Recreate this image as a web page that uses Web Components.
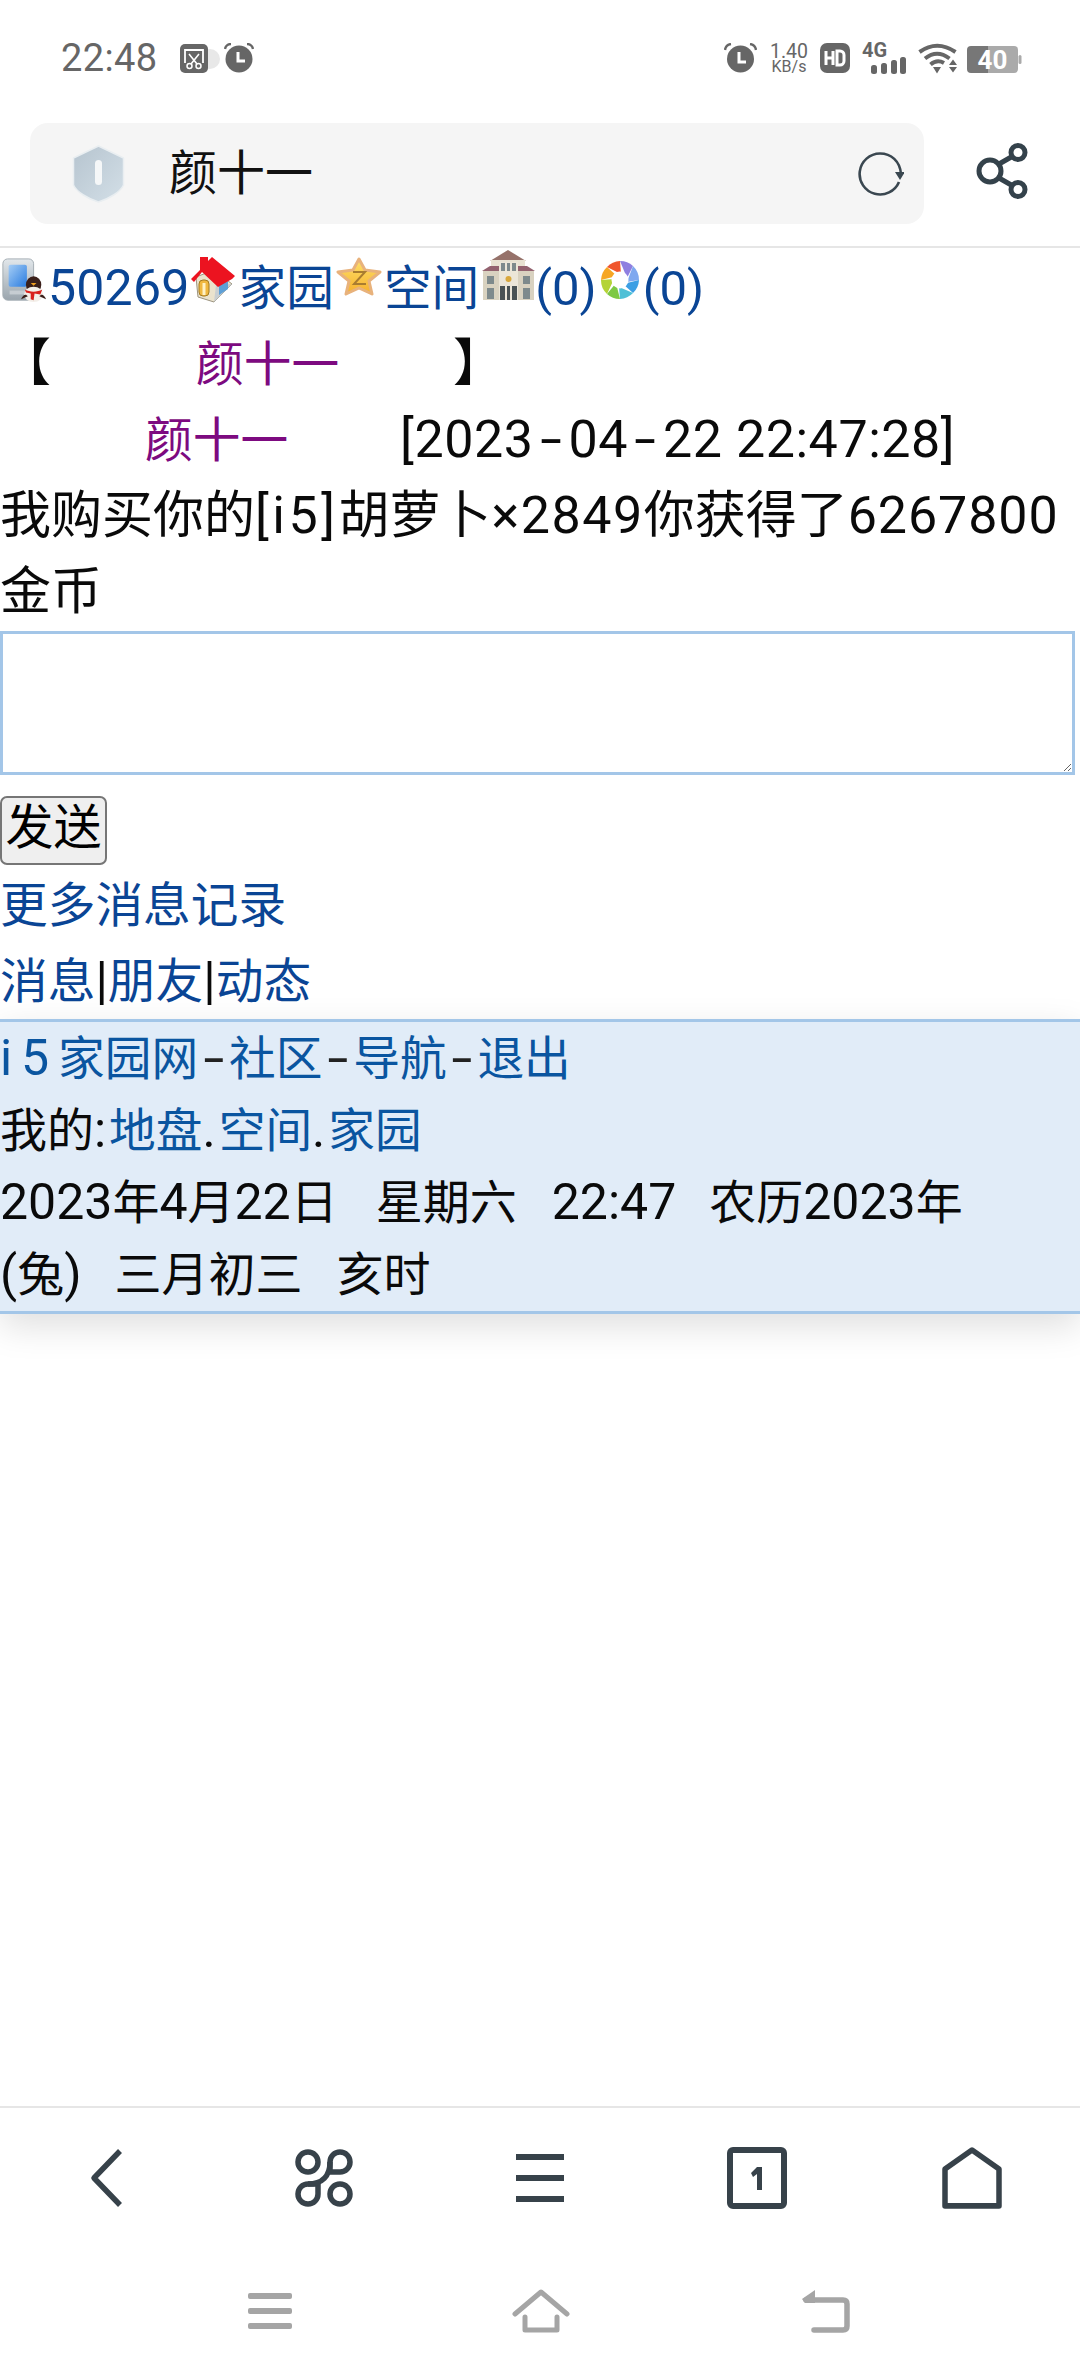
<!DOCTYPE html>
<html lang="zh-CN">
<head>
<meta charset="utf-8">
<style>
html,body{margin:0;padding:0;background:#fff}
body{font-family:Roboto,"Noto Sans CJK SC",sans-serif;font-size:48px;color:#0a0a0a}
</style>
</head>
<body>
<app-shell>
  <status-bar></status-bar>
  <address-bar title-text="颜十一"></address-bar>
  <wap-page></wap-page>
  <browser-nav></browser-nav>
  <system-nav></system-nav>
</app-shell>
<script>
const FONT='Roboto,"Noto Sans CJK SC",sans-serif';
function define(name,html){
  customElements.define(name,class extends HTMLElement{
    constructor(){super();this.attachShadow({mode:'open'}).innerHTML=typeof html==='function'?html(this):html;}
  });
}
define('app-shell',`<style>:host{display:flex;flex-direction:column;width:1080px;height:2376px;overflow:hidden;background:#fff}</style><slot></slot>`);

define('status-bar',`<style>
:host{display:flex;align-items:center;height:123px;box-sizing:border-box;padding:0 58px 0 61px;color:#666;font-family:${FONT}}
.l{display:flex;align-items:center}
.r{display:flex;align-items:center;margin-left:auto;height:31px;margin-top:-7px}
svg{display:block;flex:none}
.time{font-size:38px;letter-spacing:.4px;line-height:44px;width:119px;margin-top:-8px}
.left-icons{display:flex;align-items:center;margin-top:-7px}
.net{display:flex;flex-direction:column;align-items:center;width:38px;margin:0 12px 0 13px}
.net b{font-weight:400;font-size:19.5px;line-height:17px}
.net i{font-style:normal;font-size:16px;line-height:14px}
.sig{position:relative;width:45px;height:31px;margin-left:12px}
.sig span{position:absolute;left:0;top:0;font-size:20px;line-height:15px;font-weight:700}
.batt{position:relative;width:55px;height:27px;margin-left:9px;margin-top:3px}
.batt span{position:absolute;left:0;right:0;top:0;text-align:center;padding-right:4px;font-size:26px;line-height:28px;font-weight:700;color:#fff}
</style>
<div class="l"><div class="time">22:48</div>
<div class="left-icons">
<svg width="28" height="29" viewBox="0 0 28 29"><rect width="28" height="29" rx="5" fill="#666"/><path d="M5 19V6h18v13" fill="none" stroke="#fff" stroke-width="1.8"/><path d="M9 10l8 10M19 10l-8 10" stroke="#fff" stroke-width="1.6"/><circle cx="9.5" cy="22" r="2.5" fill="#666" stroke="#fff" stroke-width="1.5"/><circle cx="18.5" cy="22" r="2.5" fill="#666" stroke="#fff" stroke-width="1.5"/></svg>
<svg width="16" height="29" viewBox="0 0 16 29"><circle cx="2" cy="15" r="10" fill="#e8e8e8"/></svg>
<svg width="30" height="30" viewBox="0 0 30 30"><circle cx="15" cy="16" r="13.5" fill="#666"/><path d="M1 6a6 6 0 0 1 6-5M29 6a6 6 0 0 0-6-5" fill="none" stroke="#666" stroke-width="2.4"/><path d="M14 9v9h7" fill="none" stroke="#fff" stroke-width="3"/></svg>
</div></div>
<div class="r">
<svg width="33" height="30" viewBox="0 0 33 30"><circle cx="16.5" cy="16" r="13.5" fill="#666"/><path d="M1 7a7 7 0 0 1 6-6M32 7a7 7 0 0 0-6-6" fill="none" stroke="#666" stroke-width="2.4"/><path d="M15 9v10h7" fill="none" stroke="#fff" stroke-width="3"/></svg>
<div class="net"><b>1.40</b><i>KB/s</i></div>
<svg width="30" height="30" viewBox="0 0 30 30"><rect width="30" height="30" rx="7" fill="#666"/><path d="M6 8v14M13 8v14M6 15h7" stroke="#fff" stroke-width="3" fill="none"/><path d="M17 8h3a4 4 0 0 1 4 4v6a4 4 0 0 1-4 4h-3z" stroke="#fff" stroke-width="3" fill="none"/></svg>
<div class="sig"><svg width="45" height="31" viewBox="0 0 45 31"><rect x="9" y="22" width="6" height="9" rx="2.5" fill="#666"/><rect x="19" y="20" width="6" height="11" rx="2.5" fill="#666"/><rect x="29" y="17" width="6" height="14" rx="2.5" fill="#666"/><rect x="38" y="14" width="6" height="17" rx="2.5" fill="#666"/></svg><span>4G</span></div>
<svg width="40" height="31" viewBox="0 0 40 31" style="margin-left:11px"><g fill="none" stroke="#666" stroke-linecap="butt"><path d="M1.5 9Q19 -3.5 37.5 9" stroke-width="4"/><path d="M7 15.5Q19 6 31.5 15.5" stroke-width="4"/><path d="M12.5 21.5Q19 16 26 20" stroke-width="4"/></g><path d="M15 24h8l-4 6.5zM31 22l4-5.5 4 5.5zM31 24h8l-4 5.5z" fill="#666"/></svg>
<div class="batt"><svg width="55" height="27" viewBox="0 0 55 27"><path d="M21 0H47a4 4 0 0 1 4 4v19a4 4 0 0 1-4 4H21z" fill="#aaa"/><path d="M21 0H4a4 4 0 0 0-4 4v19a4 4 0 0 0 4 4H21z" fill="#777"/><rect x="51.5" y="9" width="3" height="9" rx="1.5" fill="#aaa"/></svg><span>40</span></div>
</div>`);

define('address-bar',el=>`<style>
:host{display:flex;align-items:flex-start;height:125px;box-sizing:border-box;padding:0 52px 0 30px;border-bottom:2px solid #e6e6e6;font-family:${FONT}}
.box{display:flex;align-items:center;width:894px;height:101px;background:#f5f5f5;border-radius:18px;box-sizing:border-box;padding:0 20px 0 41px}
.t{margin-left:43px;font-size:48px;line-height:60px;color:#111}
.reload{margin-left:auto}
.share{margin-left:52px;margin-top:20px}
svg{display:block;flex:none}
</style>
<div class="box">
<svg width="55" height="58" viewBox="0 0 54 58"><defs><linearGradient id="sh" x1="0" y1="0" x2="1" y2="1"><stop offset="0" stop-color="#b6c4cf"/><stop offset="1" stop-color="#d3dfe7"/></linearGradient></defs><path d="M27 1L52 13V40C49 47 37 54 27 57C17 54 5 47 2 40V13z" fill="url(#sh)" stroke="#e9eef1" stroke-width="1.5" stroke-linejoin="round"/><rect x="23.5" y="15" width="7" height="25" rx="3.5" fill="#f5f7f8"/></svg>
<div class="t">${el.getAttribute('title-text')||''}</div>
<svg class="reload" width="46" height="44" viewBox="0 0 46 44"><path d="M41 30A20.5 20.5 0 1 1 22 1.5C33 1.5 42 9 43 22" fill="none" stroke="#3a4750" stroke-width="2.6"/><path d="M37 20h10l-5 8z" fill="#3a4750"/></svg>
</div>
<svg class="share" width="52" height="56" viewBox="0 0 52 56"><g fill="none" stroke="#34424b" stroke-width="5"><circle cx="14" cy="28" r="11"/><circle cx="42" cy="9.5" r="7"/><circle cx="42" cy="46.5" r="7"/><path d="M23 21L37 13M23 35L37 43"/></g></svg>`);

define('wap-link',`<style>:host{color:#0a4595;font-size:47.7px}</style><slot></slot>`);
define('wap-user',`<style>:host{color:#7d0a80;font-size:47.7px}</style><slot></slot>`);

define('mini-icon',el=>{
 const k=el.getAttribute('kind');
 const art={
 phone:`<svg width="48" height="47" viewBox="0 0 50 47"><defs><linearGradient id="p" x1="0" y1="0" x2="0" y2="1"><stop offset="0" stop-color="#e2e7eb"/><stop offset="1" stop-color="#9aa5ad"/></linearGradient><linearGradient id="ps" x1="0" y1="0" x2="1" y2="1"><stop offset="0" stop-color="#a5cdf5"/><stop offset="1" stop-color="#2a7ce0"/></linearGradient></defs><rect x="3" y="1" width="32" height="43" rx="5" fill="url(#p)" stroke="#a3acb3"/><rect x="9" y="7" width="19" height="23" rx="2" fill="url(#ps)"/><rect x="10" y="34" width="16" height="4" fill="#c6cdd2"/><ellipse cx="35" cy="28" rx="8" ry="9" fill="#3a1f1a"/><ellipse cx="35" cy="38" rx="10" ry="8" fill="#f3eee8"/><path d="M26 33c5 3 13 3 18 0l-2 5-6-1-1 7-3-1v-6l-5-1z" fill="#d8201c"/><path d="M32 26h6l-3 3z" fill="#f0a020"/><path d="M22 43c2-5 5-6 7-3zM48 43c-2-5-5-6-7-3z" fill="#3a1f1a"/></svg>`,
 home:`<svg width="47" height="48" viewBox="0 0 47 48"><path d="M6 22L8 42L24 47L42 29L24 15z" fill="#ebe3cd" stroke="#9c9480" stroke-width="1"/><path d="M42 29L24 47L26 30z" fill="#c9cfd2"/><path d="M29 29l9-3v8l-9 6z" fill="#5d9fd6"/><rect x="9" y="25" width="10" height="16" rx="4" fill="#f0b840" stroke="#a37a22"/><rect x="12.5" y="28" width="3" height="12" fill="#fff2c6"/><path d="M1 24L10 15V2H18V6L22 2L45 21L42 24L28 32L12 17L4 27z" fill="#ec1320"/></svg>`,
 star:`<svg width="46" height="39" viewBox="0 0 46 39"><defs><linearGradient id="st" x1="0" y1="0" x2="0" y2="1"><stop offset="0" stop-color="#ffe26a"/><stop offset="1" stop-color="#f5b02e"/></linearGradient></defs><path d="M23 2L29 13L44 15L33 24L36 37L23 31L10 37L13 24L2 15L17 13z" fill="url(#st)" stroke="#e8b27c" stroke-width="3" stroke-linejoin="round"/><path d="M17 15H29L18 27H30" fill="none" stroke="#a97d30" stroke-width="2"/></svg>`,
 bank:`<svg width="53" height="53" viewBox="0 0 53 53"><path d="M26 0L44 11H8z" fill="#96726a"/><rect x="9" y="10" width="34" height="10" fill="#e8e2d2"/><path d="M0 21L8 16h37l8 5z" fill="#93626f"/><rect x="1" y="21" width="51" height="29" fill="#d9d2c0"/><rect x="17" y="12" width="19" height="38" fill="#ece6d8"/><path d="M19 13h4v8h-4zM25 13h3v8h-3zM30 13h4v8h-4zM5 26h7v8H5zM41 26h7v8h-7zM5 38h7v11H5zM41 38h7v11h-7z" fill="#7e8a8c"/><path d="M18 36h5v14h-5zM25 36h3v14h-3zM30 36h5v14h-5z" fill="#4a5254"/><circle cx="26.5" cy="29" r="3" fill="#d9a83c"/></svg>`,
 aperture:`<svg width="40" height="40" viewBox="0 0 40 40"><path d="M20 1a19 19 0 0 1 13 5l-6 12z" fill="#8f7fe0"/><path d="M33 6a19 19 0 0 1 6 14l-12 2z" fill="#7fa8ef"/><path d="M39 20a19 19 0 0 1-6 13l-10-9z" fill="#3c9fe4"/><path d="M33 33a19 19 0 0 1-13 6l-1-12z" fill="#4fc0d6"/><path d="M20 39a19 19 0 0 1-13-5l9-11z" fill="#7dc944"/><path d="M7 34A19 19 0 0 1 1 20l13-1z" fill="#b4d337"/><path d="M1 20A19 19 0 0 1 7 7l10 9z" fill="#f6a623"/><path d="M7 7a19 19 0 0 1 13-6l1 13z" fill="#f0562d"/><circle cx="20" cy="20" r="8.5" fill="#fff"/></svg>`
 };
 return `<style>:host{display:inline-block;vertical-align:${el.getAttribute('va')||'0'}px;line-height:0;margin-left:${el.getAttribute('ml')||0}px}svg{display:block}</style>${art[k]}`;
});

define('wap-page',`<style>
:host{display:flex;flex-direction:column;flex:none;height:1858px;font-family:${FONT};font-size:51px;color:#0a0a0a}
.line{height:76px;line-height:79px;white-space:nowrap}
.n{font-size:50px;letter-spacing:.2px}
.p{font-size:49px}
.d{font-size:52px;letter-spacing:.55px}
.h{display:inline-block;transform:scaleX(1.5);margin:0 10px}
.box{display:block;box-sizing:border-box;width:1075px;height:144px;margin:3px 0 21px;border:3px solid #a3c6e8;background:#fff;padding:0;outline:none;font:inherit}
button{display:block;box-sizing:border-box;width:107px;height:69px;padding:0 0 6px;font:inherit;font-size:48px;line-height:60px;color:#000;background:#efefef;border:2.5px solid #767676;border-radius:7px}
</style>
<div class="line"><mini-icon kind="phone" va="1"></mini-icon><wap-link><span class="n">50269</span></wap-link><mini-icon kind="home" va="2"></mini-icon><wap-link style="margin-left:2px">家园</wap-link><mini-icon kind="star" ml="2" va="9"></mini-icon><wap-link style="margin-left:2px">空间</wap-link><mini-icon kind="bank" ml="3" va="2"></mini-icon><wap-link><span class="p">(0)</span></wap-link><mini-icon kind="aperture" ml="3" va="5"></mini-icon><wap-link style="margin-left:3px"><span class="p">(0)</span></wap-link></div>
<div class="line">【<wap-user style="margin-left:145px">颜十一</wap-user><span style="margin-left:114px">】</span></div>
<div class="line"><wap-user style="margin-left:145px">颜十一</wap-user><span class="d" style="margin-left:112px">[2023<span class="h">-</span>04<span class="h">-</span>22 22:47:28]</span></div>
<div class="line">我购买你的<span class="d" style="letter-spacing:3.5px">[i5]</span>胡萝卜<span class="d" style="letter-spacing:1.5px">×2849</span>你获得了<span class="d" style="letter-spacing:.9px">6267800</span></div>
<div class="line">金币</div>
<textarea class="box" aria-label="消息"></textarea>
<button>发送</button>
<div class="line"><wap-link>更多消息记录</wap-link></div>
<div class="line"><wap-link>消息</wap-link>|<wap-link>朋友</wap-link>|<wap-link>动态</wap-link></div>
<page-footer></page-footer>`);

define('page-footer',`<style>
:host{display:block;margin-top:2px;box-sizing:border-box;height:295px;background:#e1ecf8;border-top:3px solid #a3c6e8;border-bottom:3px solid #a3c6e8;box-shadow:0 12px 34px rgba(0,0,0,.13);font-size:47px;color:#0a0a0a}
.line{height:72px;line-height:72px;white-space:nowrap}
a{color:#0a55a0;text-decoration:none;font-size:46.7px}
.n{font-size:50px}
.s{font-size:50px;letter-spacing:3px}
.h{display:inline-block;transform:scaleX(1.5);margin:0 8.5px;font-size:50px;color:#222}
</style>
<div class="line"><a><span class="n" style="word-spacing:-3.5px">i 5 </span>家园网</a><span class="h">-</span><a>社区</a><span class="h">-</span><a>导航</a><span class="h">-</span><a>退出</a></div>
<div class="line">我的<span class="s">:</span><a>地盘</a><span class="s">.</span><a>空间</a><span class="s">.</span><a>家园</a></div>
<div class="line"><span class="n">2023</span>年<span class="n">4</span>月<span class="n">22</span>日<span style="margin-left:38px">星期六</span><span class="n" style="margin-left:35px">22:47</span><span style="margin-left:33px">农历</span><span class="n">2023</span>年</div>
<div class="line"><span class="n">(</span>兔<span class="n">)</span><span style="margin-left:33px">三月初三</span><span style="margin-left:34px">亥时</span></div>`);

define('browser-nav',`<style>
:host{display:grid;grid-template-columns:repeat(5,1fr);align-items:center;justify-items:center;height:146px;box-sizing:border-box;border-top:2px solid #e6e6e6;padding:0 0 4px}
svg{display:block}
</style>
<svg width="60" height="60" viewBox="0 0 60 60"><path d="M42 3L16 30L42 57" fill="none" stroke="#37424a" stroke-width="5.5" stroke-linejoin="round"/></svg>
<svg width="58" height="58" viewBox="0 0 58 58"><g fill="none" stroke="#37424a" stroke-width="5.5" stroke-linejoin="round"><circle cx="13" cy="13" r="10"/><circle cx="45" cy="45" r="10"/><path d="M45 23H35V13A10 10 0 1 1 45 23Z"/><path d="M13 35H23V45A10 10 0 1 1 13 35Z"/><path d="M35 13C35 27 27 35 13 35"/></g></svg>
<svg width="48" height="48" viewBox="0 0 48 48"><path d="M0 0h48v6H0zM0 21h48v6H0zM0 42h48v6H0z" fill="#37424a"/></svg>
<svg width="60" height="62" viewBox="0 0 60 62" style="margin-left:2px"><rect x="3" y="3" width="54" height="56" rx="3" fill="none" stroke="#37424a" stroke-width="6"/><path d="M30 20h5v23h-5V27l-4 3-2-4z" fill="#37424a"/></svg>
<svg width="60" height="62" viewBox="0 0 60 62"><path d="M3 59V22L30 3L57 22V59Z" fill="none" stroke="#37424a" stroke-width="5.5" stroke-linejoin="round"/><path d="M3 56h54v3H3z" fill="#37424a"/></svg>`);

define('system-nav',`<style>
:host{display:flex;align-items:center;height:100px;box-sizing:border-box;padding:18px 0 0 248px}
svg{display:block;flex:none}
</style>
<svg width="44" height="36" viewBox="0 0 44 36"><g fill="#a5a5a5"><rect width="44" height="6" rx="2"/><rect y="15" width="44" height="6" rx="2"/><rect y="30" width="44" height="6" rx="2"/></g></svg>
<svg width="58" height="44" viewBox="0 0 58 44" style="margin-left:220px"><g fill="none" stroke="#a5a5a5" stroke-width="5" stroke-linecap="round" stroke-linejoin="round"><path d="M3 25L29 3L55 25"/><path d="M13 28V41H45V28"/></g></svg>
<svg width="48" height="43" viewBox="0 0 48 43" style="margin-left:232px"><g fill="none" stroke="#a5a5a5" stroke-width="5.5" stroke-linecap="round" stroke-linejoin="round"><path d="M4 10H41Q45 10 45 14V36Q45 40 41 40H12"/></g><path d="M0 9L13 0V13H3z" fill="#a5a5a5"/></svg>`);
</script>
</body>
</html>
